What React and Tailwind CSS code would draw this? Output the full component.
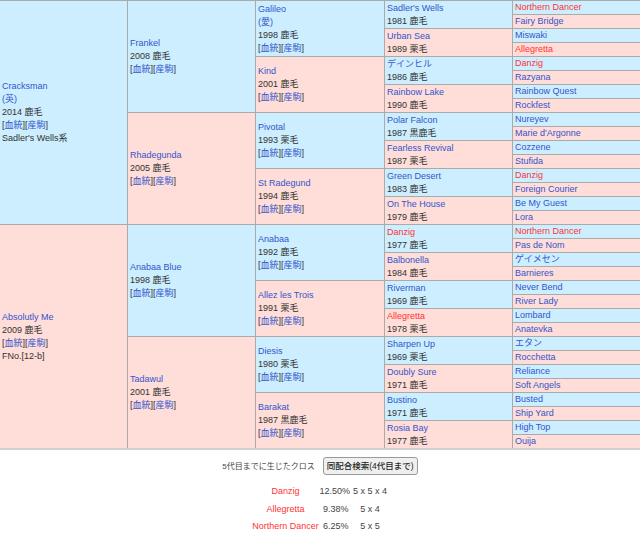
import React from "react";

const gen1 = [
  { name: "Cracksman", from: "(英)", year: "2014 鹿毛", links: true, extra: "Sadler's Wells系" },
  { name: "Absolutly Me", year: "2009 鹿毛", links: true, extra: "FNo.[12-b]" },
];

const gen2 = [
  { name: "Frankel", year: "2008 鹿毛", links: true },
  { name: "Rhadegunda", year: "2005 鹿毛", links: true },
  { name: "Anabaa Blue", year: "1998 鹿毛", links: true },
  { name: "Tadawul", year: "2001 鹿毛", links: true },
];

const gen3 = [
  { name: "Galileo", from: "(愛)", year: "1998 鹿毛", links: true },
  { name: "Kind", year: "2001 鹿毛", links: true },
  { name: "Pivotal", year: "1993 栗毛", links: true },
  { name: "St Radegund", year: "1994 鹿毛", links: true },
  { name: "Anabaa", year: "1992 鹿毛", links: true },
  { name: "Allez les Trois", year: "1991 栗毛", links: true },
  { name: "Diesis", year: "1980 栗毛", links: true },
  { name: "Barakat", year: "1987 黒鹿毛", links: true },
];

const gen4 = [
  { name: "Sadler's Wells", year: "1981 鹿毛" },
  { name: "Urban Sea", year: "1989 栗毛" },
  { name: "デインヒル", year: "1986 鹿毛" },
  { name: "Rainbow Lake", year: "1990 鹿毛" },
  { name: "Polar Falcon", year: "1987 黒鹿毛" },
  { name: "Fearless Revival", year: "1987 栗毛" },
  { name: "Green Desert", year: "1983 鹿毛" },
  { name: "On The House", year: "1979 鹿毛" },
  { name: "Danzig", year: "1977 鹿毛", red: true },
  { name: "Balbonella", year: "1984 鹿毛" },
  { name: "Riverman", year: "1969 鹿毛" },
  { name: "Allegretta", year: "1978 栗毛", red: true },
  { name: "Sharpen Up", year: "1969 栗毛" },
  { name: "Doubly Sure", year: "1971 鹿毛" },
  { name: "Bustino", year: "1971 鹿毛" },
  { name: "Rosia Bay", year: "1977 鹿毛" },
];

const gen5 = [
  { name: "Northern Dancer", red: true },
  { name: "Fairy Bridge" },
  { name: "Miswaki" },
  { name: "Allegretta", red: true },
  { name: "Danzig", red: true },
  { name: "Razyana" },
  { name: "Rainbow Quest" },
  { name: "Rockfest" },
  { name: "Nureyev" },
  { name: "Marie d'Argonne" },
  { name: "Cozzene" },
  { name: "Stufida" },
  { name: "Danzig", red: true },
  { name: "Foreign Courier" },
  { name: "Be My Guest" },
  { name: "Lora" },
  { name: "Northern Dancer", red: true },
  { name: "Pas de Nom" },
  { name: "ゲイメセン" },
  { name: "Barnieres" },
  { name: "Never Bend" },
  { name: "River Lady" },
  { name: "Lombard" },
  { name: "Anatevka" },
  { name: "エタン" },
  { name: "Rocchetta" },
  { name: "Reliance" },
  { name: "Soft Angels" },
  { name: "Busted" },
  { name: "Ship Yard" },
  { name: "High Top" },
  { name: "Ouija" },
];

const crosses = [
  { name: "Danzig", pct: "12.50%", gen: "5 x 5 x 4" },
  { name: "Allegretta", pct: "9.38%", gen: "5 x 4" },
  { name: "Northern Dancer", pct: "6.25%", gen: "5 x 5" },
];

function Cell({ d, i }) {
  return (
    <div
      className={`flex-1 min-h-0 flex flex-col justify-center px-[2px] overflow-hidden whitespace-nowrap ${
        i % 2 ? "bg-[#ffddd8]" : "bg-[#cceeff]"
      }`}
    >
      <span className={d.red ? "text-[#ff3333]" : "text-[#3355cc]"}>{d.name}</span>
      {d.from && <span className="text-[#3355cc]">{d.from}</span>}
      {d.year && <span>{d.year}</span>}
      {d.links && (
        <span>
          [<span className="text-[#3355cc]">血統</span>][
          <span className="text-[#3355cc]">産駒</span>]
        </span>
      )}
      {d.extra && <span>{d.extra}</span>}
    </div>
  );
}

function Column({ items, width }) {
  return (
    <div className={`flex flex-col gap-px ${width}`}>
      {items.map((d, i) => (
        <Cell key={i} d={d} i={i} />
      ))}
    </div>
  );
}

export default function App() {
  return (
    <div className="w-[640px] h-[536px] bg-white overflow-hidden text-[9px] leading-[13px] text-[#333] font-['Liberation_Sans','Noto_Sans_CJK_JP',sans-serif]">
      {/* 血統表 */}
      <div className="flex gap-px h-[450px] pt-px bg-[#aaaaaa] border-b-2 border-[#d0d0d0]">
        <Column items={gen1} width="w-[127px]" />
        <Column items={gen2} width="w-[127px]" />
        <Column items={gen3} width="w-[128px]" />
        <Column items={gen4} width="w-[127px]" />
        <Column items={gen5} width="flex-1" />
      </div>

      {/* クロス */}
      <div className="flex justify-center items-center gap-[8px] mt-[7px]">
        <span className="text-[8px] text-[#444]">5代目までに生じたクロス</span>
        <button className="h-[18px] px-[3px] rounded-[3px] border border-[#9a9a9a] bg-[#efefef] text-[8.5px] text-[#222] font-medium">
          同配合検索(4代目まで)
        </button>
      </div>

      <div className="flex flex-col items-center pt-[8px] text-[9px]">
        {crosses.map((c) => (
          <div key={c.name} className="flex h-[17.5px] items-center whitespace-nowrap">
            <span className="w-[68px] flex justify-center text-[#ff3333]">{c.name}</span>
            <span className="w-[32px] text-right pr-[3px] text-[#444]">{c.pct}</span>
            <span className="w-[37px] text-center text-[#444]">{c.gen}</span>
          </div>
        ))}
      </div>
    </div>
  );
}
